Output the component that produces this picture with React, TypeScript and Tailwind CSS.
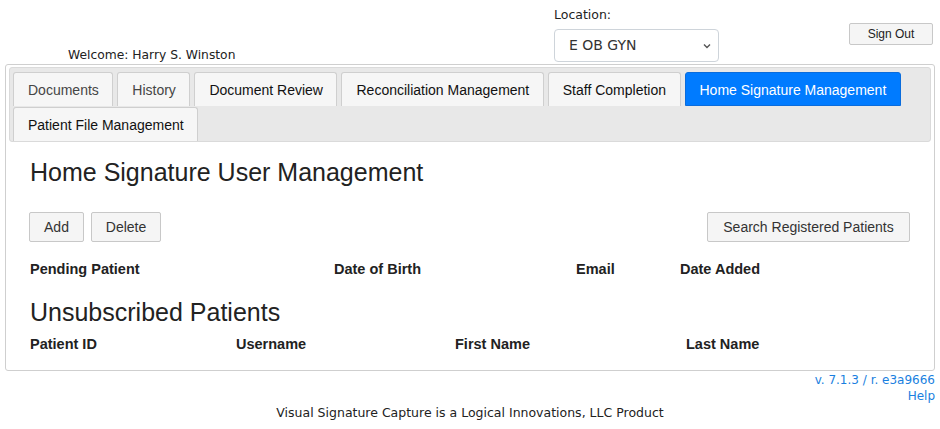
import React from "react";

const arial = { fontFamily: '"Liberation Sans", Arial, sans-serif' };

function Tab({ label, active, muted }: { label: string; active?: boolean; muted?: boolean }) {
  if (active) {
    return (
      <div className="h-[34px] pl-[14px] pr-[13.5px] pt-[2px] flex items-center border border-[#0a6cdc] bg-[#007bff] text-white text-[14px] rounded-t-[3px]">
        {label}
      </div>
    );
  }
  return (
    <div
      className={`h-[34px] pl-[14px] pr-[13.5px] pt-[2px] flex items-center border border-b-0 border-[#cfcfcf] bg-[#f6f6f6] text-[14px] rounded-t-[3px] ${
        muted ? "text-[#454545]" : "text-[#111]"
      }`}
    >
      {label}
    </div>
  );
}

function Btn({ label, w }: { label: string; w: string }) {
  return (
    <button
      className={`${w} h-[30px] pt-[1px] flex items-center justify-center border border-[#c8c8c8] bg-[#f5f5f5] rounded-[2px] text-[14px] text-[#333]`}
    >
      {label}
    </button>
  );
}

export default function App() {
  return (
    <div className="w-[940px] h-[429px] bg-white overflow-hidden" style={arial}>
      {/* header */}
      <div className="flex h-[64px]">
        <div
          className="w-[554px] pl-[68px] flex items-end pb-[2px] text-[12.3px] leading-[14px] text-[#222]"
          style={{ fontFamily: '"DejaVu Sans", sans-serif' }}
        >
          Welcome:&nbsp;Harry S. Winston
        </div>
        <div className="w-[295px] flex flex-col" style={{ fontFamily: '"DejaVu Sans", sans-serif' }}>
          <div className="h-[29px] pt-[6px] text-[12.5px] text-[#222]">Location:</div>
          <div className="w-[165px] h-[33px] border border-[#ced4da] rounded-[4px] flex items-center justify-between pl-[14px] pr-[6px] text-[14px] text-[#333]">
            <span>E OB GYN</span>
            <svg width="10" height="10" viewBox="0 0 10 10">
              <path d="M2 3.5 L5 6.5 L8 3.5" fill="none" stroke="#555" strokeWidth="1.4" />
            </svg>
          </div>
        </div>
        <div className="pt-[23px]">
          <button className="w-[84px] h-[22px] border border-[#c8c8c8] bg-[#f5f5f5] rounded-[2px] text-[12px] text-[#222] flex items-center justify-center">
            Sign Out
          </button>
        </div>
      </div>

      {/* panel */}
      <div className="mx-[5px] border border-[#cfcfcf] rounded-[3px] pt-[2px] px-[3px] pb-[16px]">
        <div className="bg-[#e8e8e8] border border-[#dadada] rounded-[3px] pl-[3px] pt-[4px] flex flex-wrap gap-x-[4px] gap-y-[1px]">
          <Tab label="Documents" muted />
          <Tab label="History" muted />
          <Tab label="Document Review" />
          <Tab label="Reconciliation Management" />
          <Tab label="Staff Completion" />
          <Tab label="Home Signature Management" active />
          <Tab label="Patient File Management" />
        </div>

        <div className="px-[21px]">
          <h1 className="mt-[15px] text-[25px] leading-[30px] text-[#222]">Home Signature User Management</h1>

          <div className="mt-[25px] flex items-center">
            <div className="flex gap-[7px] -ml-[1px]">
              <Btn label="Add" w="w-[55px]" />
              <Btn label="Delete" w="w-[70px]" />
            </div>
            <div className="ml-auto">
              <Btn label="Search Registered Patients" w="w-[203px]" />
            </div>
          </div>

          <div className="mt-[17px] grid grid-cols-[304px_242px_104px_1fr] text-[14.5px] leading-[20px] font-bold text-[#222]">
            <div>Pending Patient</div>
            <div>Date of Birth</div>
            <div>Email</div>
            <div>Date Added</div>
          </div>

          <h2 className="mt-[18px] text-[25px] leading-[30px] text-[#222]">Unsubscribed Patients</h2>

          <div className="mt-[7px] grid grid-cols-[206px_219px_231px_1fr] text-[14.5px] leading-[20px] font-bold text-[#222]">
            <div>Patient ID</div>
            <div>Username</div>
            <div>First Name</div>
            <div>Last Name</div>
          </div>
        </div>
      </div>

      {/* footer */}
      <div
        className="pr-[5px] pt-[1px] flex flex-col items-end text-[12px] leading-[16px] text-[#1a7fe0]"
        style={{ fontFamily: '"DejaVu Sans", sans-serif' }}
      >
        <div>v. 7.1.3 / r. e3a9666</div>
        <div>Help</div>
      </div>
      <div
        className="pt-[1px] text-center text-[12.5px] leading-[16px] text-[#222]"
        style={{ fontFamily: '"DejaVu Sans", sans-serif' }}
      >
        Visual Signature Capture is a Logical Innovations, LLC Product
      </div>
    </div>
  );
}
